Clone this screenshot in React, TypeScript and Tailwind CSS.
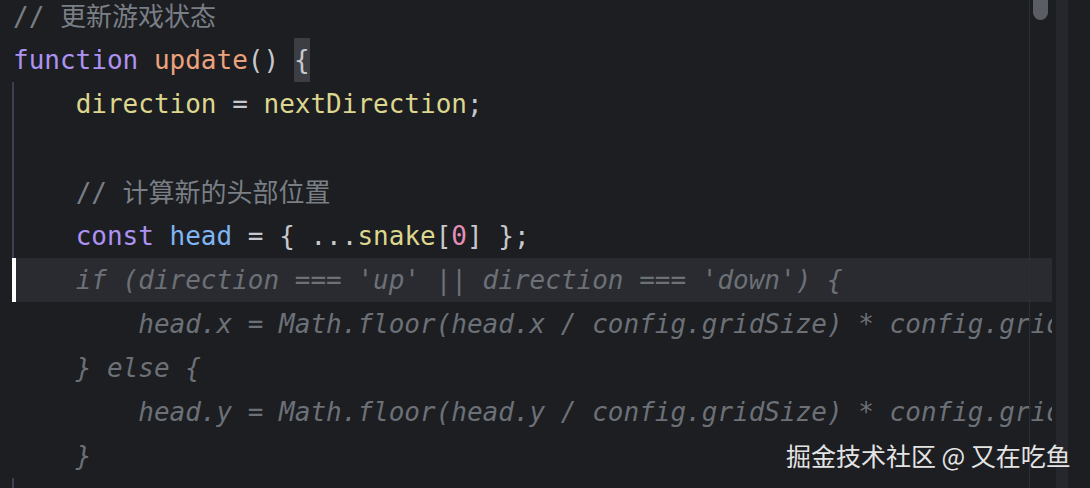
type Tok = { t: string; c: string };

const mono = "font-['DejaVu_Sans_Mono','Liberation_Mono',monospace]";

const P = 'text-[#c6c8cd]';
const KW = 'text-[#ad92f2]';
const FN = 'text-[#eca27d]';
const ID = 'text-[#dcd68e]';
const LV = 'text-[#80b4f4]';
const NUM = 'text-[#e58fb8]';
const CM = 'text-[#7a7e85]';
const DIS = 'text-[#6c7077] italic';

interface LineProps {
    tokens?: Tok[];
    indent?: number;
    guide?: boolean;
    caret?: boolean;
    children?: React.ReactNode;
}

const Comment = ({ cjk }: { cjk: string }) => (
    <span className={CM}>
        //{' '}
        <span className="font-['Noto_Sans_CJK_SC',sans-serif]">{cjk}</span>
    </span>
);

const Line: React.FC<LineProps> = ({ tokens = [], indent = 0, guide = false, caret = false, children }) => {
    return (
        <div className="relative h-[44px] shrink-0 flex items-center whitespace-pre pl-[13px]">
            {caret && <div className="absolute left-[16px] top-0 h-full w-[1036px] bg-[#2a2b30]" />}
            {guide && <div className="absolute left-[12px] top-0 h-full w-[2px] bg-[#3f3d55]" />}
            {caret && <div className="absolute left-[12px] top-0 h-full w-[4px] bg-white" />}
            <span className="relative whitespace-pre">
                <span className="whitespace-pre">{' '.repeat(indent * 4)}</span>
                {children}
                {tokens.map((tk, i) => (
                    <span key={i} className={tk.c}>
                        {tk.t}
                    </span>
                ))}
            </span>
        </div>
    );
};

export default function App() {
    return (
        <div className="relative w-[1090px] h-[488px] overflow-hidden bg-[#1c1e22] flex">
            <div className={`w-[1052px] shrink-0 overflow-hidden flex flex-col -mt-[6px] text-[26px] ${mono}`}>
                <Line>
                    <Comment cjk="更新游戏状态" />
                </Line>
                <Line
                    tokens={[
                        { t: 'function', c: KW },
                        { t: ' ', c: P },
                        { t: 'update', c: FN },
                        { t: '() ', c: P },
                    ]}
                />
                <div className="relative h-0">
                    <div className="absolute left-[294px] -top-[44px] h-[44px] w-[16px] bg-[#3c3e43] flex items-center">
                        <span className={P}>{'{'}</span>
                    </div>
                </div>
                <Line
                    indent={1}
                    guide
                    tokens={[
                        { t: 'direction', c: ID },
                        { t: ' = ', c: P },
                        { t: 'nextDirection', c: ID },
                        { t: ';', c: P },
                    ]}
                />
                <Line guide />
                <Line guide indent={1}>
                    <Comment cjk="计算新的头部位置" />
                </Line>
                <Line
                    indent={1}
                    guide
                    tokens={[
                        { t: 'const', c: KW },
                        { t: ' ', c: P },
                        { t: 'head', c: LV },
                        { t: ' = { ...', c: P },
                        { t: 'snake', c: ID },
                        { t: '[', c: P },
                        { t: '0', c: NUM },
                        { t: '] };', c: P },
                    ]}
                />
                <Line indent={1} caret tokens={[{ t: "if (direction === 'up' || direction === 'down') {", c: DIS }]} />
                <Line
                    indent={2}
                    tokens={[{ t: 'head.x = Math.floor(head.x / config.gridSize) * config.gridSize;', c: DIS }]}
                />
                <Line indent={1} tokens={[{ t: '} else {', c: DIS }]} />
                <Line
                    indent={2}
                    tokens={[{ t: 'head.y = Math.floor(head.y / config.gridSize) * config.gridSize;', c: DIS }]}
                />
                <Line indent={1} tokens={[{ t: '}', c: DIS }]} />
                <Line
                    indent={1}
                    guide
                    tokens={[
                        { t: 'snake', c: ID },
                        { t: '.', c: P },
                        { t: 'unshift', c: FN },
                        { t: '(head);', c: P },
                    ]}
                />
            </div>
            <div className="w-[4px] shrink-0" />
            <div className="w-[12px] shrink-0 h-full bg-[#25272c]" />

            {/* right margin guide + scrollbar thumb */}
            <div className="absolute left-[1029px] top-0 h-full w-px bg-[#2c2e33]" />
            <div className="absolute left-[1033px] top-0 h-[20px] w-[15px] rounded-b-full bg-[#5a5d63]" />

            <div className="absolute left-[786px] top-[443px] leading-none text-[25px] text-[#e4e4e4] font-['Noto_Sans_CJK_SC',sans-serif] whitespace-pre">
                掘金技术社区 @ 又在吃鱼
            </div>
        </div>
    );
}
